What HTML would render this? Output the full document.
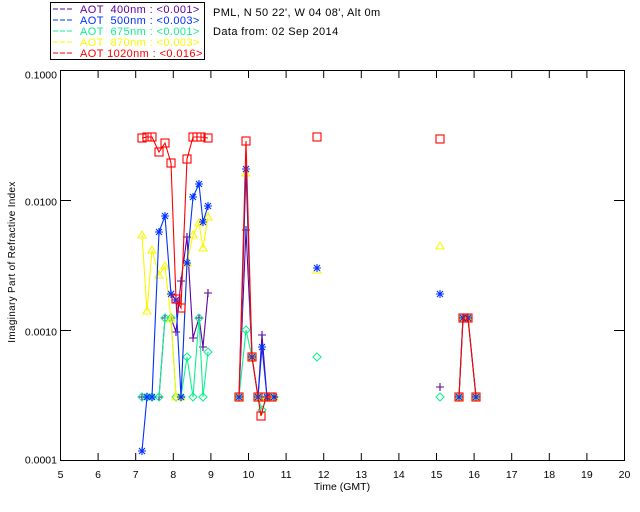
<!DOCTYPE html>
<html><head><meta charset="utf-8"><style>
html,body{margin:0;padding:0;background:#fff;}
svg{display:block;font-family:"Liberation Sans",sans-serif;}
</style></head><body>
<svg id="s" width="640" height="512" xmlns="http://www.w3.org/2000/svg" font-size="11">
<rect width="640" height="512" fill="#fff"/>
<rect x="50.5" y="2.5" width="154" height="57" fill="none" stroke="#000"/>
<g font-size="11" letter-spacing="0.4">
<line x1="53" y1="9" x2="74" y2="9" stroke="#6000a0" stroke-dasharray="5,2"/><text x="80" y="13" fill="#6000a0" xml:space="preserve">AOT  400nm : &lt;0.001&gt;</text>
<line x1="53" y1="20" x2="74" y2="20" stroke="#0030ff" stroke-dasharray="5,2"/><text x="80" y="24" fill="#0030ff" xml:space="preserve">AOT  500nm : &lt;0.003&gt;</text>
<line x1="53" y1="31" x2="74" y2="31" stroke="#10f090" stroke-dasharray="5,2"/><text x="80" y="35" fill="#10f090" xml:space="preserve">AOT  675nm : &lt;0.001&gt;</text>
<line x1="53" y1="42" x2="74" y2="42" stroke="#f8f800" stroke-dasharray="5,2"/><text x="80" y="46" fill="#f8f800" xml:space="preserve">AOT  870nm : &lt;0.003&gt;</text>
<line x1="53" y1="53" x2="74" y2="53" stroke="#ff0000" stroke-dasharray="5,2"/><text x="80" y="57" fill="#ff0000" xml:space="preserve">AOT 1020nm : &lt;0.016&gt;</text>
</g>
<text x="213" y="16" fill="#000" letter-spacing="0.4">PML, N 50 22', W 04 08', Alt 0m</text>
<text x="213" y="35" fill="#000" letter-spacing="0.4">Data from: 02 Sep 2014</text>
<rect x="60.5" y="70.5" width="564" height="390" fill="none" stroke="#000"/>
<g id="ax" stroke="#000"></g>
<g id="lab" fill="#000" font-size="10.5"></g>
<text x="342" y="490" text-anchor="middle" font-size="10.5">Time (GMT)</text>
<text transform="translate(15,262) rotate(-90)" text-anchor="middle" font-size="10" letter-spacing="0.3">Imaginary Part of Refractive Index</text>
<g id="d"></g>
</svg>
<script>
var NS="http://www.w3.org/2000/svg";
function el(p,t,a,txt){var e=document.createElementNS(NS,t);for(var k in a)e.setAttribute(k,a[k]);if(txt)e.textContent=txt;document.getElementById(p).appendChild(e);return e;}
for(var h=5;h<=20;h++){var x=60.5+(h-5)*37.6;
 el("ax","line",{x1:x,y1:460,x2:x,y2:453});el("ax","line",{x1:x,y1:71,x2:x,y2:78});
 el("lab","text",{x:x,y:478,"text-anchor":"middle"},""+h);}
var yl=["0.1000","0.0100","0.0010","0.0001"];
for(var i=0;i<4;i++){var y=70.5+i*130;el("ax","line",{x1:61,y1:y,x2:71,y2:y});el("ax","line",{x1:624,y1:y,x2:614,y2:y});
 el("lab","text",{x:57,y:y+(i==0?8:(i==3?3:5)),"text-anchor":"end"},yl[i]);}
function ser(c,pts,m){
 pts.forEach(function(seg){el("d","polyline",{points:seg.map(function(p){return p.join(",")}).join(" "),fill:"none",stroke:c,"stroke-width":1.1});
  seg.forEach(function(p){mk(c,p[0],p[1],m);});});}
function mk(c,x,y,m){
 if(m=="sq")el("d","rect",{x:x-4,y:y-4,width:8,height:8,fill:"none",stroke:c,"stroke-width":1.1});
 else if(m=="st"){el("d","path",{d:"M"+(x-4)+" "+y+"h8M"+x+" "+(y-4)+"v8M"+(x-3)+" "+(y-3)+"l6 6M"+(x+3)+" "+(y-3)+"l-6 6",stroke:c,"stroke-width":1.1});}
 else if(m=="tr")el("d","path",{d:"M"+x+" "+(y-4)+"L"+(x+4)+" "+(y+3)+"L"+(x-4)+" "+(y+3)+"Z",fill:"none",stroke:c,"stroke-width":1.1});
 else if(m=="di")el("d","path",{d:"M"+x+" "+(y-4)+"L"+(x+4)+" "+y+"L"+x+" "+(y+4)+"L"+(x-4)+" "+y+"Z",fill:"none",stroke:c,"stroke-width":1.1});
 else if(m=="pl")el("d","path",{d:"M"+(x-4)+" "+y+"h8M"+x+" "+(y-4)+"v8",stroke:c,"stroke-width":1.1});
}
ser("#6000a0",[[[142,397],[159,397],[165,318],[171,318],[176,332],[181,281],[187,237],[193,338],[199,318],[203,347],[208,293]],
 [[239,397],[246,230],[252,357],[258,397],[262,335],[267,397],[274,397]],[[440,387]],[[459,397],[463,318],[468,318],[476,397]]],"pl");
ser("#10f090",[[[142,397],[147,397],[152,397],[159,397],[165,318],[171,318],[176,397],[181,397],[187,357],[193,397],[199,318],[203,397],[208,352]],
 [[239,397],[246,330],[252,357],[258,397],[262,410],[267,397],[274,397]],[[317,357]],[[440,397]],[[459,397],[463,318],[468,318],[476,397]]],"di");
ser("#f8f800",[[[142,235],[147,311],[152,250],[159,275],[165,266],[171,319],[176,397],[181,397],[187,263],[193,235],[199,223],[203,248],[208,217]],
 [[239,397],[246,173],[252,357],[258,397],[267,397],[274,397]],[[317,270]],[[440,246]],[[459,397],[463,318],[468,318],[476,397]]],"tr");
ser("#0030ff",[[[142,451],[147,397],[152,397],[159,232],[165,216],[171,294],[176,300],[181,397],[187,263],[193,197],[199,184],[203,222],[208,206]],
 [[239,397],[246,169],[252,357],[258,397],[262,347],[267,397],[274,397]],[[317,268]],[[440,294]],[[459,397],[463,318],[468,318],[476,397]]],"st");
ser("#ff0000",[[[142,138],[147,137],[152,137],[159,152],[165,143],[171,163],[176,299],[181,308],[187,159],[193,137],[197,137],[201,137],[208,138]],
 [[239,397],[246,141],[252,357],[258,397],[261,416],[266,397],[272,397]],[[317,137]],[[440,139]],[[459,397],[463,318],[468,318],[476,397]]],"sq");
</script>
</body></html>
